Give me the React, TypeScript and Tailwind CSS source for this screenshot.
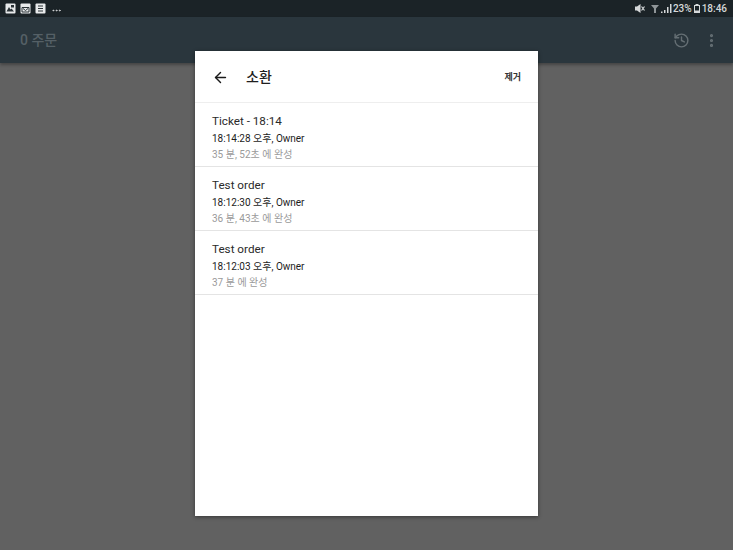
import { ArrowLeft, Ellipsis, EllipsisVertical, History } from 'lucide-react';

const font = "font-['Roboto','Noto_Sans_CJK_KR',sans-serif]";

const tickets = [
  { name: 'Ticket - 18:14', time: '18:14:28 오후, Owner', done: '35 분, 52초 에 완성' },
  { name: 'Test order', time: '18:12:30 오후, Owner', done: '36 분, 43초 에 완성' },
  { name: 'Test order', time: '18:12:03 오후, Owner', done: '37 분 에 완성' },
];

function NoteIcon({ kind }: { kind: number }) {
  return (
    <svg width="11" height="11" viewBox="0 0 11 11">
      <rect x="0.5" y="0.5" width="10" height="10" rx="1" fill="#e8eaeb" />
      {kind === 0 && <path d="M1.500 8.500 4 4 5.500 6.500 6.500 5.500 9 8.500Z M6 2h3v2.500H6Z" fill="#2a3236" />}
      {kind === 1 && <path d="M2 4.500h7v4.500H2Z M3 5.500l2.500 2L8 5.500" fill="none" stroke="#2a3236" />}
      {kind === 2 && <path d="M3 3h5M3 5.500h5M3 8h5" stroke="#2a3236" />}
    </svg>
  );
}

export default function App() {
  return (
    <div className={`${font} relative flex h-[550px] w-[733px] flex-col overflow-hidden bg-[#616161]`}>
      <div className="flex h-[17px] items-center justify-between bg-[#1b2327] pl-[5px] pr-[6px] text-[#d5d8d9]">
        <div className="flex items-center gap-[4px]">
          <NoteIcon kind={0} />
          <NoteIcon kind={1} />
          <NoteIcon kind={2} />
          <Ellipsis size={11} strokeWidth={2} className="ml-[1px] mt-[4px]" />
        </div>
        <div className="flex items-center text-[10px] font-medium leading-none">
          <svg width="10" height="9" viewBox="0 0 10 9" className="mr-[6px]">
            <path d="M0 2.500h2L5.500 0v9L2 6.500H0Z" fill="#d5d8d9" />
            <path d="M6.500 2.500l3 4M9.500 2.500l-3 4" stroke="#d5d8d9" strokeWidth="1.200" />
          </svg>
          <svg width="8" height="9" viewBox="0 0 8 9" className="mr-[2px]">
            <path d="M0 1h8L5 4.500V9H3V4.500Z" fill="#8f9598" />
          </svg>
          <svg width="11" height="9" viewBox="0 0 11 9" className="mr-[1px]">
            <path d="M0 7.500h1.500V9H0ZM3 6h1.500v3H3ZM6 3h1.500v6H6ZM9 0h1.500v9H9Z" fill="#d5d8d9" />
          </svg>
          <span>23%</span>
          <svg width="6" height="9" viewBox="0 0 6 9" className="mx-[2px]">
            <path d="M1.500 0h3v1H6v8H0V1h1.500Z" fill="#d5d8d9" />
            <path d="M1 2h4v4.500H1Z" fill="#1b2327" />
          </svg>
          <span>18:46</span>
        </div>
      </div>

      <div className="flex h-[46px] items-center justify-between bg-[#2a363d] pl-[20px] pr-[13px] shadow-[0_2px_3px_rgba(0,0,0,0.3)]">
        <span className="text-[14px] font-medium text-[#556066]">0 주문</span>
        <div className="flex items-center gap-[13px] text-[#656f74]">
          <History size={17} strokeWidth={2} />
          <EllipsisVertical size={17} strokeWidth={2.500} />
        </div>
      </div>

      <div className="absolute left-[195px] top-[51px] flex h-[465px] w-[343px] flex-col bg-white shadow-[0_1px_4px_rgba(0,0,0,0.45)]">
        <div className="flex h-[52px] items-center border-b border-[#eeeeee] pl-[17px] pr-[17px] pt-[2px]">
          <ArrowLeft size={17} strokeWidth={2} className="text-[#1a1a1a]" />
          <span className="ml-[17px] text-[14px] font-medium text-[#1f1f1f]">소환</span>
          <span className="ml-auto text-[9px] font-bold text-[#333333]">제거</span>
        </div>
        {tickets.map((t, i) => (
          <div key={i} className="flex h-[64px] flex-col border-b border-[#e4e4e4] pl-[17px] pt-[9px]">
            <span className="text-[11.700px] leading-[19px] text-[#2a2a2a]">{t.name}</span>
            <span className="text-[10px] leading-[16px] text-[#1c1c1c]">{t.time}</span>
            <span className="text-[10px] leading-[16px] text-[#9a9a9a]">{t.done}</span>
          </div>
        ))}
      </div>
    </div>
  );
}
